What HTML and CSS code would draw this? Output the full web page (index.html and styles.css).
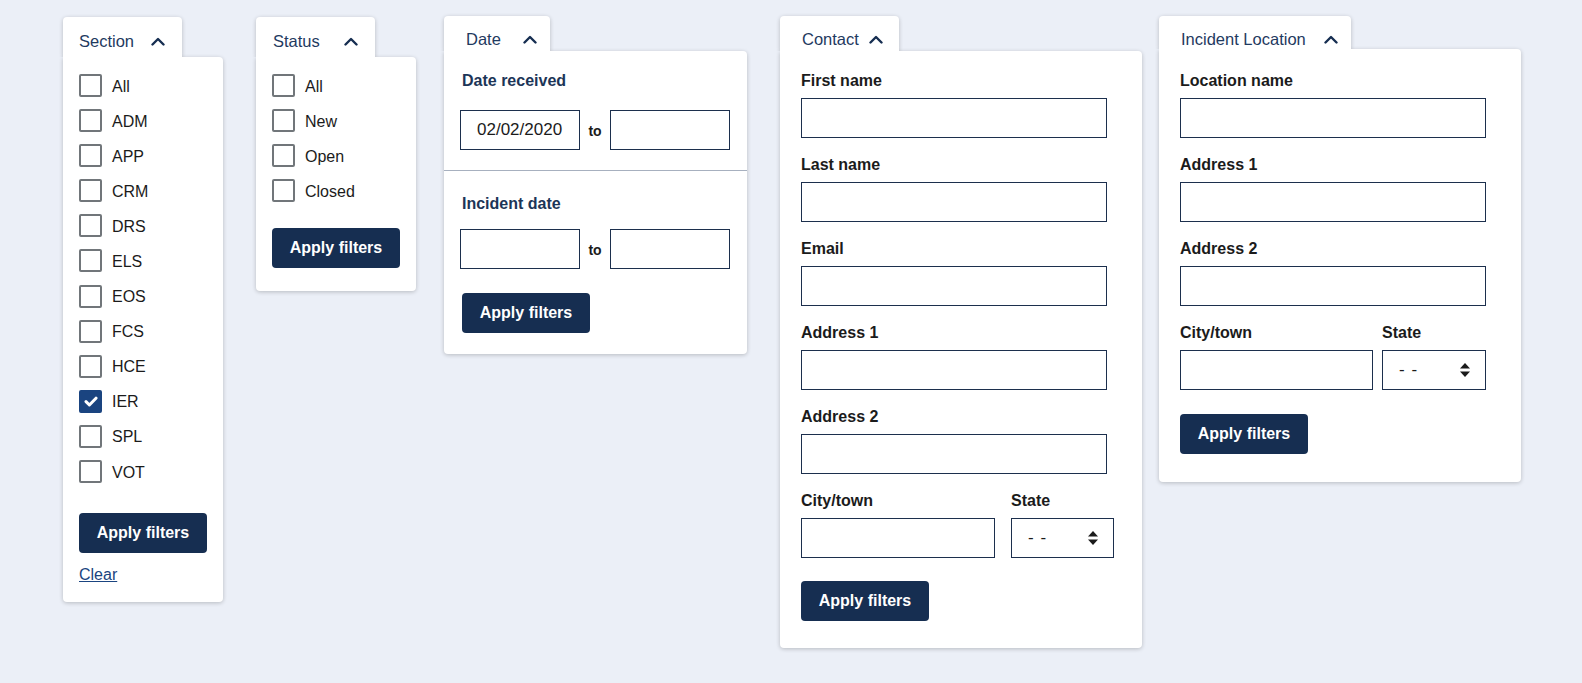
FILE: index.html
```html
<!DOCTYPE html>
<html lang="en">
<head>
<meta charset="utf-8">
<title>Filters</title>
<link rel="stylesheet" href="styles.css">
</head>
<body>
<div class="filters">

  <div class="filter filter--section">
    <div class="filter-tab">
      <span class="tab-label">Section</span>
      <svg class="chevron" viewBox="0 0 14 9" width="14" height="9"><polyline points="1.5,7.5 7,2 12.5,7.5" fill="none" stroke="#162e51" stroke-width="2.4" stroke-linecap="round" stroke-linejoin="round"/></svg>
    </div>
    <div class="filter-panel">
      <ul class="checklist">
        <li class="check"><span class="box"></span><span class="check-label">All</span></li>
        <li class="check"><span class="box"></span><span class="check-label">ADM</span></li>
        <li class="check"><span class="box"></span><span class="check-label">APP</span></li>
        <li class="check"><span class="box"></span><span class="check-label">CRM</span></li>
        <li class="check"><span class="box"></span><span class="check-label">DRS</span></li>
        <li class="check"><span class="box"></span><span class="check-label">ELS</span></li>
        <li class="check"><span class="box"></span><span class="check-label">EOS</span></li>
        <li class="check"><span class="box"></span><span class="check-label">FCS</span></li>
        <li class="check"><span class="box"></span><span class="check-label">HCE</span></li>
        <li class="check"><span class="box box--checked"><svg viewBox="0 0 14 11" width="14" height="11"><polyline points="2,5.6 5.4,9 12,2.2" fill="none" stroke="#fff" stroke-width="3" stroke-linecap="round" stroke-linejoin="round"/></svg></span><span class="check-label">IER</span></li>
        <li class="check"><span class="box"></span><span class="check-label">SPL</span></li>
        <li class="check"><span class="box"></span><span class="check-label">VOT</span></li>
      </ul>
      <button class="btn btn--section">Apply filters</button>
      <a class="clear" href="#">Clear</a>
    </div>
  </div>

  <div class="filter filter--status">
    <div class="filter-tab">
      <span class="tab-label">Status</span>
      <svg class="chevron" viewBox="0 0 14 9" width="14" height="9"><polyline points="1.5,7.5 7,2 12.5,7.5" fill="none" stroke="#162e51" stroke-width="2.4" stroke-linecap="round" stroke-linejoin="round"/></svg>
    </div>
    <div class="filter-panel">
      <ul class="checklist">
        <li class="check"><span class="box"></span><span class="check-label">All</span></li>
        <li class="check"><span class="box"></span><span class="check-label">New</span></li>
        <li class="check"><span class="box"></span><span class="check-label">Open</span></li>
        <li class="check"><span class="box"></span><span class="check-label">Closed</span></li>
      </ul>
      <button class="btn btn--status">Apply filters</button>
    </div>
  </div>

  <div class="filter filter--date">
    <div class="filter-tab">
      <span class="tab-label">Date</span>
      <svg class="chevron" viewBox="0 0 14 9" width="14" height="9"><polyline points="1.5,7.5 7,2 12.5,7.5" fill="none" stroke="#162e51" stroke-width="2.4" stroke-linecap="round" stroke-linejoin="round"/></svg>
    </div>
    <div class="filter-panel date-panel">
      <div class="date-section date-section--first">
        <div class="date-label">Date received</div>
        <div class="date-range date-range--first">
          <div class="input date-input">02/02/2020</div>
          <span class="to">to</span>
          <div class="input date-input"></div>
        </div>
      </div>
      <div class="date-section date-section--second">
        <div class="date-label">Incident date</div>
        <div class="date-range date-range--second">
          <div class="input date-input"></div>
          <span class="to">to</span>
          <div class="input date-input"></div>
        </div>
        <button class="btn btn--date">Apply filters</button>
      </div>
    </div>
  </div>

  <div class="filter filter--contact">
    <div class="filter-tab">
      <span class="tab-label">Contact</span>
      <svg class="chevron" viewBox="0 0 14 9" width="14" height="9"><polyline points="1.5,7.5 7,2 12.5,7.5" fill="none" stroke="#162e51" stroke-width="2.4" stroke-linecap="round" stroke-linejoin="round"/></svg>
    </div>
    <div class="filter-panel form-panel">
      <div class="field"><label class="field-label">First name</label><div class="input input--wide"></div></div>
      <div class="field"><label class="field-label">Last name</label><div class="input input--wide"></div></div>
      <div class="field"><label class="field-label">Email</label><div class="input input--wide"></div></div>
      <div class="field"><label class="field-label">Address 1</label><div class="input input--wide"></div></div>
      <div class="field"><label class="field-label">Address 2</label><div class="input input--wide"></div></div>
      <div class="field-row">
        <div class="field field--city"><label class="field-label">City/town</label><div class="input"></div></div>
        <div class="field field--state"><label class="field-label">State</label>
          <div class="input select"><span class="select-value">- -</span>
            <svg class="select-arrows" viewBox="0 0 10 14" width="10" height="14"><polygon points="5,0 10,5.6 0,5.6" fill="#1b1b1b"/><polygon points="0,8.4 10,8.4 5,14" fill="#1b1b1b"/></svg>
          </div>
        </div>
      </div>
      <button class="btn btn--contact">Apply filters</button>
    </div>
  </div>

  <div class="filter filter--location">
    <div class="filter-tab">
      <span class="tab-label">Incident Location</span>
      <svg class="chevron" viewBox="0 0 14 9" width="14" height="9"><polyline points="1.5,7.5 7,2 12.5,7.5" fill="none" stroke="#162e51" stroke-width="2.4" stroke-linecap="round" stroke-linejoin="round"/></svg>
    </div>
    <div class="filter-panel form-panel">
      <div class="field"><label class="field-label">Location name</label><div class="input input--wide"></div></div>
      <div class="field"><label class="field-label">Address 1</label><div class="input input--wide"></div></div>
      <div class="field"><label class="field-label">Address 2</label><div class="input input--wide"></div></div>
      <div class="field-row">
        <div class="field field--city"><label class="field-label">City/town</label><div class="input"></div></div>
        <div class="field field--state"><label class="field-label">State</label>
          <div class="input select"><span class="select-value">- -</span>
            <svg class="select-arrows" viewBox="0 0 10 14" width="10" height="14"><polygon points="5,0 10,5.6 0,5.6" fill="#1b1b1b"/><polygon points="0,8.4 10,8.4 5,14" fill="#1b1b1b"/></svg>
          </div>
        </div>
      </div>
      <button class="btn btn--location">Apply filters</button>
    </div>
  </div>

</div>
</body>
</html>
```

FILE: styles.css
```css
* { box-sizing: border-box; }

html, body {
  margin: 0;
  padding: 0;
}

body {
  background: #ebeff7;
  font-family: "Liberation Sans", Arial, sans-serif;
  color: #1b1b1b;
  font-size: 16px;
  line-height: 20px;
  width: 1582px;
  height: 683px;
  overflow: hidden;
}

.filters {
  display: flex;
  align-items: flex-start;
  padding: 16px 0 0 63px;
}

.filter {
  display: flex;
  flex-direction: column;
  align-items: flex-start;
}

/* ---------- tab ---------- */
.filter-tab {
  position: relative;
  z-index: 2;
  display: flex;
  align-items: flex-start;
  align-self: flex-start;
  background: #fff;
  border-radius: 4px 4px 0 0;
  box-shadow: 0 1px 4px rgba(0, 0, 0, 0.22);
  clip-path: inset(-10px -10px 0 -10px);
  padding-top: 13px;
}

.tab-label {
  font-size: 16.5px;
  line-height: 20px;
  color: #1f3a5f;
  white-space: nowrap;
}

.chevron {
  display: block;
  margin-left: auto;
  margin-top: 6px;
  flex: none;
}

/* ---------- panel ---------- */
.filter-panel {
  position: relative;
  z-index: 1;
  background: #fff;
  border-radius: 0 4px 4px 4px;
  box-shadow: 0 1px 4px rgba(0, 0, 0, 0.22);
}

/* section */
.filter--section { margin-top: 1px; }
.filter--section .filter-tab {
  width: 119px;
  height: 40px;
  padding-top: 14px;
  padding-left: 16px;
  padding-right: 17px;
}
.filter--section .filter-panel {
  width: 160px;
  padding: 17px 16px 17px 16px;
}

/* status */
.filter--status { margin-top: 1px; margin-left: 33px; }
.filter--status .filter-tab {
  width: 119px;
  height: 40px;
  padding-top: 14px;
  padding-left: 17px;
  padding-right: 17px;
}
.filter--status .filter-panel {
  width: 160px;
  padding: 17px 16px 23px 16px;
}

/* date */
.filter--date { margin-left: 28px; }
.filter--date .filter-tab {
  width: 106px;
  height: 35px;
  padding-left: 22px;
  padding-right: 13px;
}
.date-panel {
  width: 303px;
}

/* contact */
.filter--contact { margin-left: 33px; }
.filter--contact .filter-tab {
  width: 119px;
  height: 35px;
  padding-left: 22px;
  padding-right: 16px;
}
.filter--contact .filter-panel {
  width: 362px;
  padding: 19px 0 27px 21px;
}

/* location */
.filter--location { margin-left: 17px; }
.filter--location .filter-tab {
  width: 192px;
  height: 33px;
  padding-left: 22px;
  padding-right: 13px;
}
.filter--location .filter-panel {
  width: 362px;
  padding: 21px 0 28px 21px;
}

/* ---------- checkboxes ---------- */
.checklist {
  list-style: none;
  margin: 0;
  padding: 0;
  display: flex;
  flex-direction: column;
  gap: 12.1px;
}

.check {
  display: flex;
  align-items: center;
  gap: 10px;
  height: 23px;
}

.box {
  width: 23px;
  height: 23px;
  flex: none;
  border: 2px solid #71767a;
  border-radius: 2px;
  background: #fff;
  display: flex;
  align-items: center;
  justify-content: center;
}

.box--checked {
  background: #1a4480;
  border-color: #1a4480;
}

.box--checked svg { display: block; }

.check-label {
  font-size: 16px;
  line-height: 20px;
  padding-top: 2px;
  color: #1b1b1b;
}

/* ---------- buttons ---------- */
.btn {
  display: flex;
  align-items: center;
  justify-content: center;
  width: 128px;
  height: 40px;
  padding: 0;
  border: 0;
  border-radius: 4px;
  background: #162e51;
  color: #fff;
  font-family: "Liberation Sans", Arial, sans-serif;
  font-weight: 700;
  font-size: 16px;
  line-height: 20px;
  cursor: pointer;
}

.btn--section { margin-top: 30px; }
.btn--status { margin-top: 26px; }
.btn--date { margin-top: 24px; margin-left: 2px; }
.btn--contact { margin-top: 23px; }
.btn--location { margin-top: 24px; }

.clear {
  display: block;
  margin-top: 12px;
  font-size: 16px;
  line-height: 20px;
  color: #1a4480;
  text-decoration: underline;
}

/* ---------- inputs ---------- */
.input {
  height: 40px;
  border: 1px solid #1c2f4d;
  background: #fff;
  margin-top: 7px;
}

.input--wide { width: 306px; }

/* date */
.date-section { padding-left: 16px; }
.date-section--first {
  padding-top: 20px;
  padding-bottom: 20px;
  border-bottom: 1px solid #a7b0bf;
}
.date-section--second {
  padding-top: 23px;
  padding-bottom: 21px;
}

.date-label {
  margin-left: 2px;
  font-weight: 700;
  font-size: 16px;
  line-height: 20px;
  color: #1c3557;
}

.date-range {
  display: flex;
  align-items: center;
}
.date-range--first { margin-top: 19px; }
.date-range--second { margin-top: 15px; }

.date-input {
  width: 120px;
  margin-top: 0;
  display: flex;
  align-items: center;
  padding-left: 16px;
  font-size: 17px;
  color: #1b1b1b;
}

.to {
  width: 30px;
  text-align: center;
  font-weight: 700;
  font-size: 14px;
  padding-top: 2px;
  color: #1b1b1b;
}

/* form fields */
.field + .field,
.field + .field-row { margin-top: 16px; }

.field-label {
  display: block;
  padding-top: 1px;
  font-weight: 700;
  font-size: 16px;
  line-height: 20px;
  color: #1b1b1b;
}

.field-row {
  display: flex;
}

.filter--contact .field--city { width: 194px; }
.filter--contact .field--state { width: 103px; margin-left: 16px; }
.filter--location .field--city { width: 193px; }
.filter--location .field--state { width: 104px; margin-left: 9px; }

.field-row .field + .field { margin-top: 0; }

.select {
  display: flex;
  align-items: center;
  padding: 0 15px 0 16px;
}

.select-value {
  font-size: 17px;
  color: #1b1b1b;
  white-space: pre;
  letter-spacing: 1px;
}

.select-arrows {
  display: block;
  margin-left: auto;
}
```
